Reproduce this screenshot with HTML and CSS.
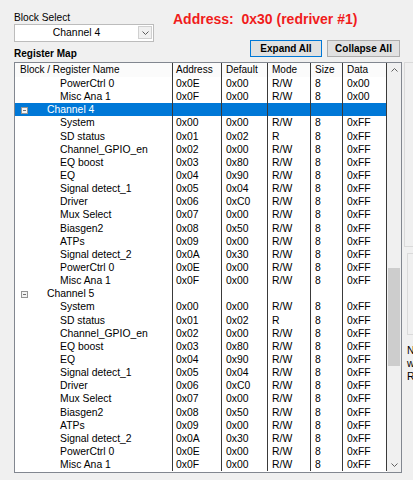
FILE: index.html
```html
<!DOCTYPE html>
<html lang="en">
<head>
    <meta charset="UTF-8">
    <title>Register Map</title>
    <link rel="stylesheet" href="styles.css">
</head>
<body>
    <div class="window">
        <div class="main">
            <div class="head">
                <div class="left-col">
                    <div class="label">Block Select</div>
                    <div class="combo">
                        <span class="combo-text">Channel 4</span>
                        <span class="combo-btn">
                            <svg width="7" height="4" viewBox="0 0 7 4"><path d="M0.5 0.5 L3.5 3.5 L6.5 0.5" fill="none" stroke="#5a5a5a" stroke-width="1"/></svg>
                        </span>
                    </div>
                    <div class="section-label">Register Map</div>
                </div>
                <div class="right-col">
                    <div class="address">Address:  0x30 (redriver #1)</div>
                    <div class="buttons">
                        <button class="btn btn-expand">Expand All</button>
                        <button class="btn btn-collapse">Collapse All</button>
                    </div>
                </div>
            </div>

            <div class="grid-box">
                <div class="grid">
                    <div class="grid-row grid-head">
                        <div>Block / Register Name</div><div>Address</div><div>Default</div><div>Mode</div><div>Size</div><div>Data</div>
                    </div>
                    <div class="grid-row"><div>PowerCtrl 0</div><div>0x0E</div><div>0x00</div><div>R/W</div><div>8</div><div>0x00</div></div>
                    <div class="grid-row"><div>Misc Ana 1</div><div>0x0F</div><div>0x00</div><div>R/W</div><div>8</div><div>0x00</div></div>
                    <div class="grid-row group selected"><div><span class="tree-icon"></span>Channel 4</div><div></div><div></div><div></div><div></div><div></div></div>
                    <div class="grid-row"><div>System</div><div>0x00</div><div>0x00</div><div>R/W</div><div>8</div><div>0xFF</div></div>
                    <div class="grid-row"><div>SD status</div><div>0x01</div><div>0x02</div><div>R</div><div>8</div><div>0xFF</div></div>
                    <div class="grid-row"><div>Channel_GPIO_en</div><div>0x02</div><div>0x00</div><div>R/W</div><div>8</div><div>0xFF</div></div>
                    <div class="grid-row"><div>EQ boost</div><div>0x03</div><div>0x80</div><div>R/W</div><div>8</div><div>0xFF</div></div>
                    <div class="grid-row"><div>EQ</div><div>0x04</div><div>0x90</div><div>R/W</div><div>8</div><div>0xFF</div></div>
                    <div class="grid-row"><div>Signal detect_1</div><div>0x05</div><div>0x04</div><div>R/W</div><div>8</div><div>0xFF</div></div>
                    <div class="grid-row"><div>Driver</div><div>0x06</div><div>0xC0</div><div>R/W</div><div>8</div><div>0xFF</div></div>
                    <div class="grid-row"><div>Mux Select</div><div>0x07</div><div>0x00</div><div>R/W</div><div>8</div><div>0xFF</div></div>
                    <div class="grid-row"><div>Biasgen2</div><div>0x08</div><div>0x50</div><div>R/W</div><div>8</div><div>0xFF</div></div>
                    <div class="grid-row"><div>ATPs</div><div>0x09</div><div>0x00</div><div>R/W</div><div>8</div><div>0xFF</div></div>
                    <div class="grid-row"><div>Signal detect_2</div><div>0x0A</div><div>0x30</div><div>R/W</div><div>8</div><div>0xFF</div></div>
                    <div class="grid-row"><div>PowerCtrl 0</div><div>0x0E</div><div>0x00</div><div>R/W</div><div>8</div><div>0xFF</div></div>
                    <div class="grid-row"><div>Misc Ana 1</div><div>0x0F</div><div>0x00</div><div>R/W</div><div>8</div><div>0xFF</div></div>
                    <div class="grid-row group"><div><span class="tree-icon"></span>Channel 5</div><div></div><div></div><div></div><div></div><div></div></div>
                    <div class="grid-row"><div>System</div><div>0x00</div><div>0x00</div><div>R/W</div><div>8</div><div>0xFF</div></div>
                    <div class="grid-row"><div>SD status</div><div>0x01</div><div>0x02</div><div>R</div><div>8</div><div>0xFF</div></div>
                    <div class="grid-row"><div>Channel_GPIO_en</div><div>0x02</div><div>0x00</div><div>R/W</div><div>8</div><div>0xFF</div></div>
                    <div class="grid-row"><div>EQ boost</div><div>0x03</div><div>0x80</div><div>R/W</div><div>8</div><div>0xFF</div></div>
                    <div class="grid-row"><div>EQ</div><div>0x04</div><div>0x90</div><div>R/W</div><div>8</div><div>0xFF</div></div>
                    <div class="grid-row"><div>Signal detect_1</div><div>0x05</div><div>0x04</div><div>R/W</div><div>8</div><div>0xFF</div></div>
                    <div class="grid-row"><div>Driver</div><div>0x06</div><div>0xC0</div><div>R/W</div><div>8</div><div>0xFF</div></div>
                    <div class="grid-row"><div>Mux Select</div><div>0x07</div><div>0x00</div><div>R/W</div><div>8</div><div>0xFF</div></div>
                    <div class="grid-row"><div>Biasgen2</div><div>0x08</div><div>0x50</div><div>R/W</div><div>8</div><div>0xFF</div></div>
                    <div class="grid-row"><div>ATPs</div><div>0x09</div><div>0x00</div><div>R/W</div><div>8</div><div>0xFF</div></div>
                    <div class="grid-row"><div>Signal detect_2</div><div>0x0A</div><div>0x30</div><div>R/W</div><div>8</div><div>0xFF</div></div>
                    <div class="grid-row"><div>PowerCtrl 0</div><div>0x0E</div><div>0x00</div><div>R/W</div><div>8</div><div>0xFF</div></div>
                    <div class="grid-row"><div>Misc Ana 1</div><div>0x0F</div><div>0x00</div><div>R/W</div><div>8</div><div>0xFF</div></div>
                </div>
                <div class="vscroll">
                    <div class="arrow">
                        <svg width="7" height="4" viewBox="0 0 7 4"><path d="M0.5 3.5 L3.5 0.5 L6.5 3.5" fill="none" stroke="#606060" stroke-width="1"/></svg>
                    </div>
                    <div class="track"><div class="thumb"></div></div>
                    <div class="arrow">
                        <svg width="7" height="4" viewBox="0 0 7 4"><path d="M0.5 0.5 L3.5 3.5 L6.5 0.5" fill="none" stroke="#606060" stroke-width="1"/></svg>
                    </div>
                </div>
            </div>
        </div>

        <div class="side">
            <div class="side-box side-box-top"></div>
            <div class="side-box side-box-mid"></div>
            <div class="side-note">
                <div>N</div>
                <div>w</div>
                <div>R</div>
            </div>
        </div>
    </div>
</body>
</html>
```

FILE: styles.css
```css
* {
    margin: 0;
    padding: 0;
    box-sizing: border-box;
}

body, html {
    height: 100%;
    background: #f0f0f0;
    font-family: "Liberation Sans", Arial, sans-serif;
    color: #000;
    overflow: hidden;
}

.window {
    display: flex;
    height: 480px;
    padding-left: 14px;
}

.main {
    width: 388px;
    flex: none;
}

/* верхняя часть: выбор блока, адрес, кнопки */
.head {
    display: flex;
    height: 62px;
}

.left-col {
    width: 140px;
    padding-top: 11px;
}

.label {
    font-size: 10.2px;
    line-height: 13px;
}

.combo {
    display: flex;
    height: 18px;
    border: 1px solid #bcbcbc;
    background: #fff;
}

.combo-text {
    flex: 1;
    text-align: center;
    font-size: 10.4px;
    line-height: 16px;
}

.combo-btn {
    display: flex;
    align-items: center;
    justify-content: center;
    width: 14px;
    height: 13px;
    margin: 1px 1px 0 0;
    border: 1px solid #d0d0d0;
    background: #f0f0f0;
}

.section-label {
    margin-top: 5px;
    font-size: 10px;
    font-weight: bold;
    line-height: 13px;
}

.right-col {
    flex: 1;
    padding-top: 11px;
}

.address {
    padding-left: 19px;
    color: #f01c1c;
    font-size: 14px;
    font-weight: bold;
    line-height: 17px;
    white-space: pre;
}

.buttons {
    display: flex;
    justify-content: flex-end;
    gap: 5px;
    margin-top: 12px;
    padding-right: 2px;
}

.btn {
    height: 17px;
    border: 1px solid #adadad;
    background: #e1e1e1;
    font: bold 10px "Liberation Sans", Arial, sans-serif;
    color: #000;
}

.btn-expand {
    width: 72px;
    border-color: #0078d7;
}

.btn-collapse {
    width: 73px;
}

/* таблица регистров */
.grid-box {
    display: flex;
    height: 411px;
    border: 1px solid #828790;
    background: #fff;
}

.grid {
    width: 372px;
}

.grid-row {
    display: grid;
    grid-template-columns: 158px 49px 46px 43px 32px 44px;
    height: 13.15px;
    font-size: 10.4px;
    line-height: 13.15px;
}

.grid-row > div {
    border-right: 1px solid #3a3a3a;
    padding-left: 4px;
    white-space: nowrap;
    overflow: hidden;
}

.grid-row > div:first-child {
    padding-left: 45px;
}

.grid-row > div:nth-child(2) {
    padding-left: 3px;
}

.grid-head {
    height: 14px;
    line-height: 14px;
    font-size: 10px;
    background: #fbfbfb;
}

.grid-head > div:first-child {
    padding-left: 5px;
}

.grid-row.group > div:first-child {
    padding-left: 6px;
}

.selected {
    background: #0078d7;
    color: #fff;
}

.tree-icon {
    display: inline-flex;
    align-items: center;
    justify-content: center;
    width: 7px;
    height: 7px;
    margin-right: 19px;
    border: 1px solid #959595;
    background: #f4f4f4;
    vertical-align: middle;
}

.tree-icon::before {
    content: "";
    width: 3px;
    height: 1px;
    background: #707070;
}

.vscroll {
    display: flex;
    flex-direction: column;
    width: 14px;
    background: #f0f0f0;
}

.arrow {
    display: flex;
    align-items: center;
    justify-content: center;
    height: 14px;
}

.track {
    flex: 1;
    padding: 0 1px;
}

.thumb {
    height: 98px;
    margin-top: 191px;
    background: #cdcdcd;
}

/* обрезанная правая панель */
.side {
    flex: 1;
    margin-left: 2px;
}

.side-box {
    border: 1px solid #dadada;
    border-right: none;
}

.side-box-top {
    height: 185px;
    margin-top: 62px;
}

.side-box-mid {
    height: 82px;
    margin-top: 6px;
    margin-left: 3px;
}

.side-note {
    margin-top: 9px;
    padding-left: 3px;
    font-size: 10.4px;
    line-height: 13px;
}
```
